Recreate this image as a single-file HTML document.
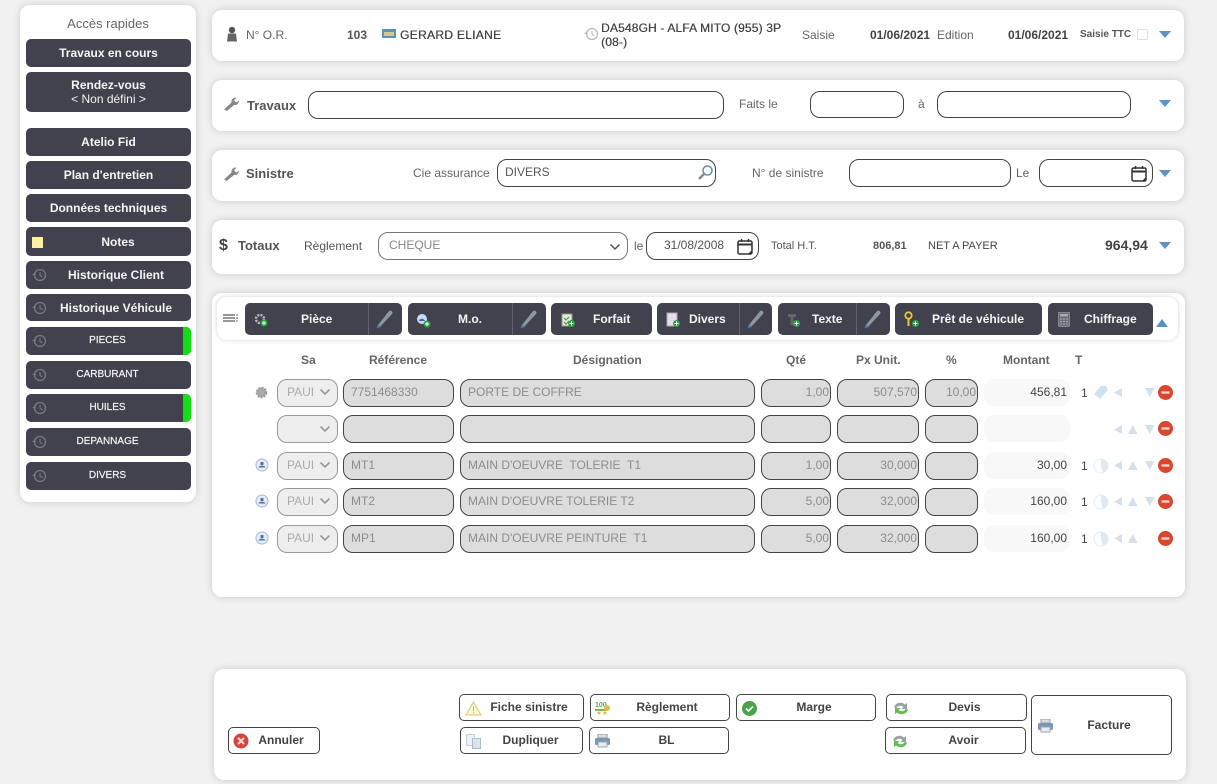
<!DOCTYPE html>
<html lang="fr"><head><meta charset="utf-8"><title>Ordre de réparation</title>
<style>
html,body{margin:0;padding:0}
body{width:1217px;height:784px;overflow:hidden;background:#f1f1f1;position:relative;font-family:"Liberation Sans",Arial,sans-serif;color:#444;font-size:12px}
.a,.card,.b,.i,.t,svg{position:absolute}
.card{background:#fff;border-radius:10px;box-shadow:0 0 8px rgba(0,0,0,.16)}
.b{left:26px;width:165px;background:#42424f;border-radius:5px;color:#f4f4f4;font-weight:bold;font-size:12px;text-align:center;box-sizing:border-box;display:flex;align-items:center;justify-content:center;line-height:14px;overflow:hidden}
.b.s{font-size:10px;font-weight:normal;-webkit-text-stroke:.2px #f4f4f4}
.b.s span{margin-left:-2px}
.b.s svg{left:6px;top:7px}
.g{position:absolute;right:0;top:0;bottom:0;width:8px;background:#0fe010}
.i{box-sizing:border-box;border:1px solid #444;border-radius:10px;background:#fff;font-size:12px;color:#555;line-height:25px;padding-left:7px;white-space:nowrap}
.t{white-space:nowrap;line-height:14px}
.tb{position:absolute;top:303px;height:32px;background:#42424f;border-radius:5px;color:#f4f4f4;font-weight:bold;font-size:12px;line-height:32px;box-sizing:border-box}
.tb span{position:absolute;white-space:nowrap}
.sp{position:absolute;top:303px;width:1px;height:32px;background:#62626e}
.g1{background:#ddd;color:#8c8c8c;height:28px;line-height:25px;padding-left:7px}
.sel{background:#eee;border-color:#999;color:#aaa;padding-left:9px}
.r{text-align:right;padding:0 1px 0 0}
.m{position:absolute;left:984px;width:86px;height:27px;background:#f8f8f8;border-radius:10px;text-align:right;line-height:27px;color:#444;box-sizing:border-box;padding-right:3px}
.h{position:absolute;top:353px;font-weight:bold;color:#666;font-size:12px;line-height:14px;white-space:nowrap}
.ft{position:absolute;box-sizing:border-box;background:#fff;border:1px solid #444;border-radius:5px;font-weight:bold;font-size:12px;color:#444;text-align:center;line-height:25px;height:27px;white-space:nowrap}
</style></head><body>
<svg width="0" height="0" style="position:absolute"><defs>
<g id="clk"><circle cx="8" cy="7" r="5.5" fill="none" stroke="currentColor" stroke-width="1.3"/><path d="M8 4v3.4l2.4 1.4" fill="none" stroke="currentColor" stroke-width="1.1"/><path d="M0 7l2.5-2.4 1.8 2.4z" fill="currentColor"/></g>
<g id="dn"><path d="M0 0h12L6 7z" fill="#5b93c4"/></g>
<g id="wr"><path d="M1 14.5l7.5-7c-.5-2 .8-4.600 4-5l1 .2-2.300 2.300.8 1.800 1.800.6 2-2.200c.4 3-2 5.200-4.800 4.800l-7.200 6z" fill="#888"/></g>
<g id="pen"><path d="M3 18l-1 3 3-1 12-13c1-1.200.3-2.600-1-3.200-1-.4-1.800 0-2.300.7z" fill="#8f96a2"/><path d="M2 21l1-4 3 2.700z" fill="#4a86b8"/></g>
<g id="cal"><rect x="1" y="3" width="14" height="13" rx="1.500" fill="#fff" stroke="#333" stroke-width="1.500"/><path d="M1 6.500h14" stroke="#333" stroke-width="2"/><path d="M4.500 1v3M11.500 1v3" stroke="#333" stroke-width="1.500"/><path d="M11 16l4-4v4z" fill="#333"/></g>
<g id="minus"><circle cx="7.500" cy="7.500" r="7.500" fill="#d9452f"/><rect x="3.500" y="6.300" width="8" height="2.400" fill="#f2d0c8"/></g>
<g id="l"><path d="M8 0v9L0 4.500z" fill="#d4e0ea"/></g>
<g id="u"><path d="M0 9h9.500L4.750 0z" fill="#d4e0ea"/></g>
<g id="d"><path d="M0 0h9.500L4.750 9z" fill="#d4e0ea"/></g>
<g id="pie"><circle cx="8" cy="8" r="7" fill="#fcfdfe" stroke="#e9edf1" stroke-width="1"/><path d="M8 1a7 7 0 0 1 2 13.700L8 8z" fill="#dfe9f2"/></g>
<g id="mo"><circle cx="7" cy="7" r="6" fill="#e6edf4" stroke="#a9b8cf"/><path d="M3.500 9.500c.5-2.500 6-2.500 7 0z" fill="#4d70b0"/><rect x="5.500" y="4" width="3" height="3" fill="#4d70b0"/></g>
<g id="ref"><path d="M1 7.500C2 3 8 1 12 4.500L14 3v6H8.500l2-2C8 5 4.500 5.500 3.500 8z" fill="#9aa4a0"/><path d="M15 9.500C14 14 8 16 4 12.500L2 14V8h5.500l-2 2c2.500 2 6 1.500 7-1z" fill="#66bb55"/></g>
<g id="prn"><rect x="3" y="0" width="9" height="4" fill="#d8dee4" stroke="#99a"/><rect x="0" y="4" width="15" height="7" rx="1.500" fill="#7b97b2"/><rect x="3" y="8" width="9" height="5" fill="#e8ecf0" stroke="#9aa"/></g>
<g id="plus"><circle cx="3.500" cy="3.500" r="3.500" fill="#2fa344"/><path d="M3.500 1.500v4M1.500 3.500h4" stroke="#fff" stroke-width="1"/></g>
</defs></svg>

<!-- Sidebar -->
<div class="card" style="left:20px;top:5px;width:176px;height:497px"></div>
<div class="t" style="left:20px;width:176px;text-align:center;top:17px;color:#666;font-size:13px">Accès rapides</div>
<div class="b" style="top:39px;height:28px">Travaux en cours</div>
<div class="b" style="top:72px;height:40px"><div>Rendez-vous<br><span style="font-weight:normal">&lt; Non défini &gt;</span></div></div>
<div class="b" style="top:128px;height:28px">Atelio Fid</div>
<div class="b" style="top:161px;height:28px">Plan d'entretien</div>
<div class="b" style="top:194px;height:28px">Données techniques</div>
<div class="b" style="top:227px;height:29px;padding-left:19px">Notes<span style="position:absolute;left:6px;top:10px;width:11px;height:11px;background:#fdf0a0"></span></div>
<div class="b" style="top:261px;height:28px;padding-left:15px">Historique Client<svg style="left:6px;top:7px;color:#717a88" width="16" height="14"><use href="#clk"/></svg></div>
<div class="b" style="top:294px;height:27px;padding-left:15px">Historique Véhicule<svg style="left:6px;top:7px;color:#717a88" width="16" height="14"><use href="#clk"/></svg></div>
<div class="b s" style="top:327px;height:28px"><span>PIECES</span><svg style="color:#717a88" width="16" height="14"><use href="#clk"/></svg><i class="g"></i></div>
<div class="b s" style="top:361px;height:28px"><span>CARBURANT</span><svg style="color:#717a88" width="16" height="14"><use href="#clk"/></svg></div>
<div class="b s" style="top:394px;height:28px"><span>HUILES</span><svg style="color:#717a88" width="16" height="14"><use href="#clk"/></svg><i class="g"></i></div>
<div class="b s" style="top:428px;height:28px"><span>DEPANNAGE</span><svg style="color:#717a88" width="16" height="14"><use href="#clk"/></svg></div>
<div class="b s" style="top:462px;height:28px"><span>DIVERS</span><svg style="color:#717a88" width="16" height="14"><use href="#clk"/></svg></div>

<!-- Header -->
<div class="card" style="left:212px;top:10px;width:972px;height:51px"></div>
<svg style="left:226px;top:26px" width="12" height="17"><circle cx="6" cy="4" r="3.200" fill="#555"/><path d="M1 15.500l1-8h8l1 8z" fill="#666"/></svg>
<div class="t" style="left:246px;top:28px;color:#666">N° O.R.</div>
<div class="t" style="left:347px;top:28px;font-weight:bold;color:#555">103</div>
<svg style="left:382px;top:29px" width="15" height="10"><rect width="14" height="9" fill="#5a93bb"/><rect x="2" y="3" width="10" height="4" fill="#d5c99a"/></svg>
<div class="t" style="left:400px;top:28px;color:#444;text-shadow:.3px 0 #444;letter-spacing:.3px">GERARD ELIANE</div>
<svg style="left:584px;top:27px;color:#b5bcc4" width="16" height="14"><use href="#clk"/></svg>
<div class="t" style="left:601px;top:21px;width:195px;white-space:normal;color:#444;text-shadow:.3px 0 #444;letter-spacing:.15px">DA548GH - ALFA MITO (955) 3P (08-)</div>
<div class="t" style="left:802px;top:28px;color:#666">Saisie</div>
<div class="t" style="left:870px;top:28px;font-weight:bold;color:#444">01/06/2021</div>
<div class="t" style="left:937px;top:28px;color:#666">Edition</div>
<div class="t" style="left:1008px;top:28px;font-weight:bold;color:#444">01/06/2021</div>
<div class="t" style="left:1080px;top:28px;font-size:10px;font-weight:bold;color:#555">Saisie TTC</div>
<div class="a" style="left:1137px;top:29px;width:11px;height:11px;border:1px solid #ddd;box-sizing:border-box;border-radius:2px"></div>
<svg style="left:1159px;top:31px" width="12" height="8"><use href="#dn"/></svg>

<!-- Travaux -->
<div class="card" style="left:212px;top:80px;width:972px;height:51px"></div>
<svg style="left:223px;top:95px" width="17" height="17"><use href="#wr"/></svg>
<div class="t" style="left:247px;top:99px;font-weight:bold;color:#555;font-size:13px">Travaux</div>
<div class="i" style="left:308px;top:91px;width:416px;height:28px"></div>
<div class="t" style="left:739px;top:97px;color:#666">Faits le</div>
<div class="i" style="left:810px;top:91px;width:94px;height:27px"></div>
<div class="t" style="left:918px;top:97px;color:#666">à</div>
<div class="i" style="left:937px;top:91px;width:194px;height:27px"></div>
<svg style="left:1159px;top:100px" width="12" height="8"><use href="#dn"/></svg>

<!-- Sinistre -->
<div class="card" style="left:212px;top:150px;width:972px;height:51px"></div>
<svg style="left:223px;top:165px" width="17" height="17"><use href="#wr"/></svg>
<div class="t" style="left:246px;top:167px;font-weight:bold;color:#555;font-size:13px">Sinistre</div>
<div class="t" style="left:413px;top:166px;color:#666">Cie assurance</div>
<div class="i" style="left:497px;top:159px;width:219px;height:28px">DIVERS</div>
<svg style="left:697px;top:164px" width="17" height="17"><circle cx="10.500" cy="6.500" r="4.500" fill="#fff" stroke="#5b8fb5" stroke-width="1.500"/><path d="M7 10l-5 5" stroke="#888" stroke-width="2.500"/></svg>
<div class="t" style="left:752px;top:166px;color:#666">N° de sinistre</div>
<div class="i" style="left:849px;top:159px;width:162px;height:28px"></div>
<div class="t" style="left:1016px;top:166px;color:#666">Le</div>
<div class="i" style="left:1039px;top:159px;width:114px;height:28px"></div>
<svg style="left:1131px;top:165px" width="16" height="17"><use href="#cal"/></svg>
<svg style="left:1159px;top:170px" width="12" height="8"><use href="#dn"/></svg>

<!-- Totaux -->
<div class="card" style="left:212px;top:220px;width:972px;height:54px"></div>
<div class="t" style="left:219px;top:239px;font-weight:bold;color:#444;font-size:16px">$</div>
<div class="t" style="left:238px;top:239px;font-weight:bold;color:#555;font-size:13px">Totaux</div>
<div class="t" style="left:304px;top:239px;color:#555">Règlement</div>
<div class="i" style="left:378px;top:232px;width:250px;height:28px;border-color:#777;color:#888;padding-left:10px">CHEQUE</div>
<svg style="left:609px;top:243px" width="12" height="8"><path d="M1.500 1.500l4.500 4.500 4.500-4.500" fill="none" stroke="#555" stroke-width="1.500"/></svg>
<div class="t" style="left:634px;top:239px;color:#666">le</div>
<div class="i" style="left:646px;top:232px;width:113px;height:28px;padding-left:17px">31/08/2008</div>
<svg style="left:737px;top:238px" width="16" height="17"><use href="#cal"/></svg>
<div class="t" style="left:771px;top:239px;font-size:11px;color:#555">Total H.T.</div>
<div class="t" style="left:873px;top:239px;font-size:11px;font-weight:bold;color:#555">806,81</div>
<div class="t" style="left:928px;top:239px;font-size:11px;color:#444">NET A PAYER</div>
<div class="t" style="left:1105px;top:238px;font-weight:bold;color:#444;font-size:14px">964,94</div>
<svg style="left:1159px;top:242px" width="12" height="8"><use href="#dn"/></svg>

<!-- Table card -->
<div class="card" style="left:212px;top:293px;width:973px;height:304px"></div>
<div class="a" style="left:217px;top:297px;width:961px;height:43px;background:#fff;border-radius:10px;box-shadow:0 0 5px rgba(0,0,0,.18)"></div>
<svg style="left:223px;top:314px" width="16" height="10"><path d="M0 1h12M0 4h12M0 7h12" stroke="#777" stroke-width="1.400"/><path d="M13 1h2M13 4h2M13 7h2" stroke="#999" stroke-width="1.400"/></svg>

<div class="tb" style="left:245px;width:157px"><span style="left:56px">Pièce</span></div><div class="sp" style="left:368px"></div>
<svg style="left:254px;top:313px" width="14" height="14"><circle cx="6" cy="6" r="4" fill="none" stroke="#bbb" stroke-width="2.500" stroke-dasharray="2 1.200"/><g transform="translate(6.500,6.500)"><use href="#plus"/></g></svg>
<svg style="left:375px;top:307px" width="22" height="24"><use href="#pen"/></svg>
<div class="tb" style="left:408px;width:138px"><span style="left:50px">M.o.</span></div><div class="sp" style="left:512px"></div>
<svg style="left:416px;top:313px" width="15" height="15"><circle cx="6" cy="6" r="5" fill="#c8dcef"/><path d="M3 8c.5-3 5-3 6 0z" fill="#3a62a8"/><g transform="translate(7.500,7.500)"><use href="#plus"/></g></svg>
<svg style="left:519px;top:307px" width="22" height="24"><use href="#pen"/></svg>
<div class="tb" style="left:551px;width:101px"><span style="left:42px">Forfait</span></div>
<svg style="left:561px;top:312px" width="15" height="16"><rect x="1" y="2" width="10" height="12" fill="#e6e6d8" stroke="#997"/><path d="M3 6l2 2 3-3M3 10l2 2 3-3" stroke="#3a9a44" fill="none"/><g transform="translate(7,8)"><use href="#plus"/></g></svg>
<div class="tb" style="left:657px;width:115px"><span style="left:32px">Divers</span></div><div class="sp" style="left:739px"></div>
<svg style="left:666px;top:312px" width="15" height="16"><rect x="1" y="1" width="10" height="13" fill="#e8dcec" stroke="#aaa"/><g transform="translate(7,8)"><use href="#plus"/></g></svg>
<svg style="left:746px;top:307px" width="22" height="24"><use href="#pen"/></svg>
<div class="tb" style="left:778px;width:112px"><span style="left:34px">Texte</span></div><div class="sp" style="left:856px"></div>
<svg style="left:787px;top:313px" width="15" height="15"><path d="M1 1h8v3H6.500v8h-3V4H1z" fill="#666"/><g transform="translate(6,7)"><use href="#plus"/></g></svg>
<svg style="left:863px;top:307px" width="22" height="24"><use href="#pen"/></svg>
<div class="tb" style="left:895px;width:147px"><span style="left:37px">Prêt de véhicule</span></div>
<svg style="left:904px;top:311px" width="15" height="17"><circle cx="4.500" cy="4.500" r="3.200" fill="none" stroke="#e6c63e" stroke-width="1.800"/><path d="M4.500 8v7" stroke="#e6c63e" stroke-width="2"/><g transform="translate(8,9)"><use href="#plus"/></g></svg>
<div class="tb" style="left:1048px;width:105px"><span style="left:36px">Chiffrage</span></div>
<svg style="left:1058px;top:312px" width="12" height="15"><rect x=".5" y=".5" width="11" height="14" fill="#666c78" stroke="#888"/><rect x="2" y="2" width="8" height="2.500" fill="#aaa"/><path d="M2 7h8M2 9.500h8M2 12h8" stroke="#aab" stroke-width="1" stroke-dasharray="2 1"/></svg>
<svg style="left:1156px;top:319px" width="12" height="8"><path d="M0 8h12L6 0z" fill="#5b93c4"/></svg>

<!-- Column headers -->
<div class="h" style="left:301px">Sa</div>
<div class="h" style="left:369px">Référence</div>
<div class="h" style="left:573px">Désignation</div>
<div class="h" style="left:786px">Qté</div>
<div class="h" style="left:856px">Px Unit.</div>
<div class="h" style="left:946px">%</div>
<div class="h" style="left:1003px">Montant</div>
<div class="h" style="left:1075px">T</div>

<!-- Row 1 -->
<svg style="left:255px;top:386px" width="14" height="14"><circle cx="6.500" cy="6.500" r="4.500" fill="#aaa" stroke="#999" stroke-width="2.500" stroke-dasharray="2 1"/></svg>
<div class="i g1 sel" style="left:277px;top:379px;width:61px">PAUI</div>
<svg style="left:319px;top:388px" width="12" height="8"><path d="M1.500 1.500l4.500 4.500 4.500-4.500" fill="none" stroke="#999" stroke-width="1.600"/></svg>
<div class="i g1" style="left:343px;top:379px;width:111px">7751468330</div>
<div class="i g1" style="left:460px;top:379px;width:295px">PORTE DE COFFRE</div>
<div class="i g1 r" style="left:761px;top:379px;width:70px">1,00</div>
<div class="i g1 r" style="left:837px;top:379px;width:82px">507,570</div>
<div class="i g1 r" style="left:925px;top:379px;width:53px">10,00</div>
<div class="m" style="top:379px">456,81</div>
<div class="t" style="left:1081px;top:386px;color:#444">1</div>
<svg style="left:1093px;top:385px" width="16" height="16"><path d="M1 9l7-8h5l2 4-8 9z" fill="#d4e0ea"/></svg>
<svg style="left:1114px;top:388px" width="8" height="9"><use href="#l"/></svg>
<svg style="left:1145px;top:388px" width="10" height="9"><use href="#d"/></svg>
<svg style="left:1158px;top:385px" width="15" height="15"><use href="#minus"/></svg>

<!-- Row 2 -->
<div class="i g1 sel" style="left:277px;top:415px;width:61px"></div>
<svg style="left:319px;top:425px" width="12" height="8"><path d="M1.500 1.500l4.500 4.500 4.500-4.500" fill="none" stroke="#999" stroke-width="1.600"/></svg>
<div class="i g1" style="left:343px;top:415px;width:111px"></div>
<div class="i g1" style="left:460px;top:415px;width:295px"></div>
<div class="i g1 r" style="left:761px;top:415px;width:70px"></div>
<div class="i g1 r" style="left:837px;top:415px;width:82px"></div>
<div class="i g1 r" style="left:925px;top:415px;width:53px"></div>
<div class="m" style="top:415px"></div>
<svg style="left:1114px;top:425px" width="8" height="9"><use href="#l"/></svg>
<svg style="left:1128px;top:425px" width="10" height="9"><use href="#u"/></svg>
<svg style="left:1145px;top:425px" width="10" height="9"><use href="#d"/></svg>
<svg style="left:1158px;top:421px" width="15" height="15"><use href="#minus"/></svg>

<!-- Row 3 -->
<svg style="left:255px;top:458px" width="14" height="14"><use href="#mo"/></svg>
<div class="i g1 sel" style="left:277px;top:452px;width:61px">PAUI</div>
<svg style="left:319px;top:461px" width="12" height="8"><path d="M1.500 1.500l4.500 4.500 4.500-4.500" fill="none" stroke="#999" stroke-width="1.600"/></svg>
<div class="i g1" style="left:343px;top:452px;width:111px">MT1</div>
<div class="i g1" style="left:460px;top:452px;width:295px">MAIN D'OEUVRE&nbsp; TOLERIE&nbsp; T1</div>
<div class="i g1 r" style="left:761px;top:452px;width:70px">1,00</div>
<div class="i g1 r" style="left:837px;top:452px;width:82px">30,000</div>
<div class="i g1 r" style="left:925px;top:452px;width:53px"></div>
<div class="m" style="top:452px">30,00</div>
<div class="t" style="left:1081px;top:459px;color:#444">1</div>
<svg style="left:1093px;top:458px" width="16" height="16"><use href="#pie"/></svg>
<svg style="left:1114px;top:461px" width="8" height="9"><use href="#l"/></svg>
<svg style="left:1128px;top:461px" width="10" height="9"><use href="#u"/></svg>
<svg style="left:1145px;top:461px" width="10" height="9"><use href="#d"/></svg>
<svg style="left:1158px;top:458px" width="15" height="15"><use href="#minus"/></svg>

<!-- Row 4 -->
<svg style="left:255px;top:494px" width="14" height="14"><use href="#mo"/></svg>
<div class="i g1 sel" style="left:277px;top:488px;width:61px">PAUI</div>
<svg style="left:319px;top:497px" width="12" height="8"><path d="M1.500 1.500l4.500 4.500 4.500-4.500" fill="none" stroke="#999" stroke-width="1.600"/></svg>
<div class="i g1" style="left:343px;top:488px;width:111px">MT2</div>
<div class="i g1" style="left:460px;top:488px;width:295px">MAIN D'OEUVRE TOLERIE T2</div>
<div class="i g1 r" style="left:761px;top:488px;width:70px">5,00</div>
<div class="i g1 r" style="left:837px;top:488px;width:82px">32,000</div>
<div class="i g1 r" style="left:925px;top:488px;width:53px"></div>
<div class="m" style="top:488px">160,00</div>
<div class="t" style="left:1081px;top:495px;color:#444">1</div>
<svg style="left:1093px;top:494px" width="16" height="16"><use href="#pie"/></svg>
<svg style="left:1114px;top:497px" width="8" height="9"><use href="#l"/></svg>
<svg style="left:1128px;top:497px" width="10" height="9"><use href="#u"/></svg>
<svg style="left:1145px;top:497px" width="10" height="9"><use href="#d"/></svg>
<svg style="left:1158px;top:494px" width="15" height="15"><use href="#minus"/></svg>

<!-- Row 5 -->
<svg style="left:255px;top:531px" width="14" height="14"><use href="#mo"/></svg>
<div class="i g1 sel" style="left:277px;top:525px;width:61px">PAUI</div>
<svg style="left:319px;top:534px" width="12" height="8"><path d="M1.500 1.500l4.500 4.500 4.500-4.500" fill="none" stroke="#999" stroke-width="1.600"/></svg>
<div class="i g1" style="left:343px;top:525px;width:111px">MP1</div>
<div class="i g1" style="left:460px;top:525px;width:295px">MAIN D'OEUVRE PEINTURE&nbsp; T1</div>
<div class="i g1 r" style="left:761px;top:525px;width:70px">5,00</div>
<div class="i g1 r" style="left:837px;top:525px;width:82px">32,000</div>
<div class="i g1 r" style="left:925px;top:525px;width:53px"></div>
<div class="m" style="top:525px">160,00</div>
<div class="t" style="left:1081px;top:532px;color:#444">1</div>
<svg style="left:1093px;top:531px" width="16" height="16"><use href="#pie"/></svg>
<svg style="left:1114px;top:534px" width="8" height="9"><use href="#l"/></svg>
<svg style="left:1128px;top:534px" width="10" height="9"><use href="#u"/></svg>
<svg style="left:1158px;top:531px" width="15" height="15"><use href="#minus"/></svg>

<!-- Footer -->
<div class="card" style="left:214px;top:669px;width:972px;height:111px"></div>
<div class="ft" style="left:228px;top:727px;width:92px;padding-left:14px">Annuler</div>
<svg style="left:233px;top:733px" width="16" height="16"><circle cx="8" cy="8" r="7.500" fill="#d8443a"/><path d="M5 5l6 6M11 5l-6 6" stroke="#f6dcd8" stroke-width="2"/></svg>
<div class="ft" style="left:459px;top:694px;width:125px;padding-left:15px">Fiche sinistre</div>
<svg style="left:465px;top:701px" width="17" height="15"><path d="M8.500 1L16 14H1z" fill="#fdf6d8" stroke="#e0c860"/><path d="M8.500 5v5M8.500 11v1.500" stroke="#d8b840"/></svg>
<div class="ft" style="left:590px;top:694px;width:140px;padding-left:14px">Règlement</div>
<svg style="left:595px;top:700px" width="17" height="15"><text x="0" y="7" font-size="7" font-family="Liberation Sans" fill="#5aa84a" font-weight="bold">100</text><rect x="0" y="9" width="11" height="2" fill="#7ab85a"/><circle cx="12" cy="8" r="3" fill="#e6bb44"/><circle cx="4" cy="13" r="1.500" fill="#e6bb44"/><circle cx="10" cy="13" r="1.500" fill="#e6bb44"/></svg>
<div class="ft" style="left:736px;top:694px;width:140px;padding-left:16px">Marge</div>
<svg style="left:742px;top:701px" width="15" height="15"><circle cx="7.500" cy="7.500" r="7.500" fill="#4aa34a"/><path d="M4 7.500l2.500 2.500 4.500-4.500" fill="none" stroke="#fff" stroke-width="1.600"/></svg>
<div class="ft" style="left:886px;top:694px;width:141px;padding-left:16px">Devis</div>
<svg style="left:893px;top:700px" width="16" height="16"><use href="#ref"/></svg>
<div class="ft" style="left:460px;top:727px;width:123px;padding-left:18px">Dupliquer</div>
<svg style="left:466px;top:734px" width="16" height="15"><rect x=".5" y=".5" width="8" height="11" fill="#eef2f6" stroke="#c5ced8"/><rect x="6.500" y="4.500" width="8" height="10" fill="#dbe4ec" stroke="#aebccb"/></svg>
<div class="ft" style="left:589px;top:727px;width:140px;padding-left:15px">BL</div>
<svg style="left:595px;top:734px" width="15" height="14"><use href="#prn"/></svg>
<div class="ft" style="left:885px;top:727px;width:141px;padding-left:16px">Avoir</div>
<svg style="left:892px;top:733px" width="16" height="16"><use href="#ref"/></svg>
<div class="ft" style="left:1031px;top:695px;width:141px;height:60px;line-height:58px;padding-left:15px">Facture</div>
<svg style="left:1038px;top:719px" width="15" height="14"><use href="#prn"/></svg>
</body></html>
